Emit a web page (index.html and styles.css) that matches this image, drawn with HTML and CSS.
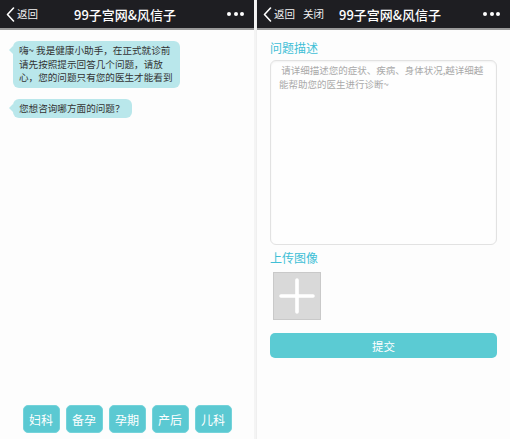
FILE: index.html
```html
<!DOCTYPE html>
<html lang="zh-CN">
<head>
<meta charset="utf-8">
<title>99子宫网&amp;风信子</title>
<link rel="stylesheet" href="styles.css">
</head>
<body>
<div class="screens">
  <section class="panel chat-panel">
    <header class="bar bar-center">
      <div class="bar-left">
        <svg class="chev" width="9" height="15" viewBox="0 0 9 15"><path d="M7.5 1 L1.5 7.5 L7.5 14" fill="none" stroke="#fff" stroke-width="1.6" stroke-linecap="round" stroke-linejoin="round"/></svg>
        <span class="bar-link">返回</span>
      </div>
      <div class="bar-title">99子宫网&amp;风信子</div>
      <div class="bar-right"><span class="dot"></span><span class="dot"></span><span class="dot"></span></div>
    </header>
    <div class="chat">
      <div class="bubble">嗨~ 我是健康小助手，在正式就诊前<br>请先按照提示回答几个问题，请放<br>心，您的问题只有您的医生才能看到</div>
      <div class="bubble">您想咨询哪方面的问题？</div>
    </div>
    <div class="choices">
      <button class="chip">妇科</button>
      <button class="chip">备孕</button>
      <button class="chip">孕期</button>
      <button class="chip">产后</button>
      <button class="chip">儿科</button>
    </div>
  </section>
  <div class="divider"></div>
  <section class="panel form-panel">
    <header class="bar bar-flow">
      <svg class="chev" width="9" height="15" viewBox="0 0 9 15"><path d="M7.5 1 L1.5 7.5 L7.5 14" fill="none" stroke="#fff" stroke-width="1.6" stroke-linecap="round" stroke-linejoin="round"/></svg>
      <span class="bar-link">返回</span>
      <span class="bar-link close">关闭</span>
      <div class="bar-title flow-title">99子宫网&amp;风信子</div>
      <div class="bar-right push"><span class="dot"></span><span class="dot"></span><span class="dot"></span></div>
    </header>
    <div class="form">
      <div class="label">问题描述</div>
      <div class="textarea"><span class="ph">&nbsp;请详细描述您的症状、疾病、身体状况,越详细越能帮助您的医生进行诊断~</span></div>
      <div class="label label-upload">上传图像</div>
      <div class="upload">
        <svg width="38" height="38" viewBox="0 0 38 38"><path d="M19 3 V35 M3 19 H35" stroke="#fff" stroke-width="3.6" stroke-linecap="round"/></svg>
      </div>
      <button class="submit">提交</button>
    </div>
  </section>
</div>
</body>
</html>
```
FILE: styles.css
```css
* { box-sizing: border-box; }
html, body { margin: 0; padding: 0; }
body {
  width: 510px;
  height: 439px;
  overflow: hidden;
  background: #fdfdfd;
  font-family: "Noto Sans CJK SC", "Noto Sans", "Liberation Sans", sans-serif;
  color: #333;
}
.screens {
  display: flex;
  height: 439px;
}
.panel {
  display: flex;
  flex-direction: column;
  height: 100%;
  background: #fdfdfd;
}
.chat-panel { width: 254px; }
.form-panel { width: 254px; border-left: 1px solid #efefef; }
.divider { width: 2px; background: #f4f4f4; }

.bar {
  height: 30px;
  flex: none;
  background: #1e1e22;
  border-bottom: 2px solid #9a9a9a;
  color: #fff;
  align-items: center;
}
.bar-center {
  display: grid;
  grid-template-columns: 1fr auto 1fr;
  padding: 0 10px 0 6px;
}
.bar-flow {
  display: flex;
  padding: 0 10px 0 6px;
}
.bar-left { display: flex; align-items: center; }
.chev { display: block; margin-right: 2px; }
.bar-link { font-size: 10.5px; color: #f2f2f2; line-height: 14px; }
.close { margin-left: 8px; }
.bar-title {
  font-size: 13px;
  font-weight: 500;
  white-space: nowrap;
}
.flow-title { margin-left: 15px; }
.bar-right {
  display: flex;
  justify-content: flex-end;
  align-items: center;
  gap: 2.5px;
}
.push { margin-left: auto; }
.dot {
  width: 4px;
  height: 4px;
  border-radius: 50%;
  background: #fff;
}

.chat {
  flex: 1;
  display: flex;
  flex-direction: column;
  align-items: flex-start;
  gap: 11px;
  padding: 11px 0 0 13px;
}
.bubble {
  position: relative;
  background: #b9e7eb;
  border-radius: 6px;
  padding: 3px 7px 3px 6px;
  font-size: 9.6px;
  line-height: 13.5px;
  color: #333;
}
.bubble::before {
  content: "";
  position: absolute;
  left: -4px;
  top: 5px;
  border-style: solid;
  border-width: 4px 4px 4px 0;
  border-color: transparent #b9e7eb transparent transparent;
}
.choices {
  display: flex;
  justify-content: center;
  gap: 6px;
  padding-bottom: 6px;
}
.chip {
  width: 37px;
  height: 28px;
  border: 1px solid #74d3da;
  border-radius: 5px;
  background: #5bc9d2;
  color: #fff;
  font-family: inherit;
  font-size: 12px;
  padding: 0;
}

.form {
  display: flex;
  flex-direction: column;
  padding: 10px 13px 0 13px;
}
.label {
  font-size: 12px;
  line-height: 15px;
  color: #40bfd6;
}
.textarea {
  margin-top: 5px;
  height: 185px;
  border: 1px solid #e2e2e2;
  border-radius: 6px;
  background: #fefefe;
  box-shadow: inset 0 1px 2px rgba(0,0,0,0.05);
  padding: 2px 6px 0 8px;
  font-size: 9.5px;
  line-height: 14px;
}
.ph { color: #a9a9a9; }
.label-upload { margin-top: 5px; }
.upload {
  margin: 7px 0 0 3px;
  width: 48px;
  height: 48px;
  background: #d9d9d9;
  border: 1px solid #c9c9c9;
  display: flex;
  align-items: center;
  justify-content: center;
}
.upload svg { display: block; }
.submit {
  margin-top: 13px;
  height: 25px;
  width: 100%;
  border: none;
  border-radius: 5px;
  background: #5bcbd3;
  color: #fff;
  font-family: inherit;
  font-size: 11.5px;
  padding: 0;
}
```
